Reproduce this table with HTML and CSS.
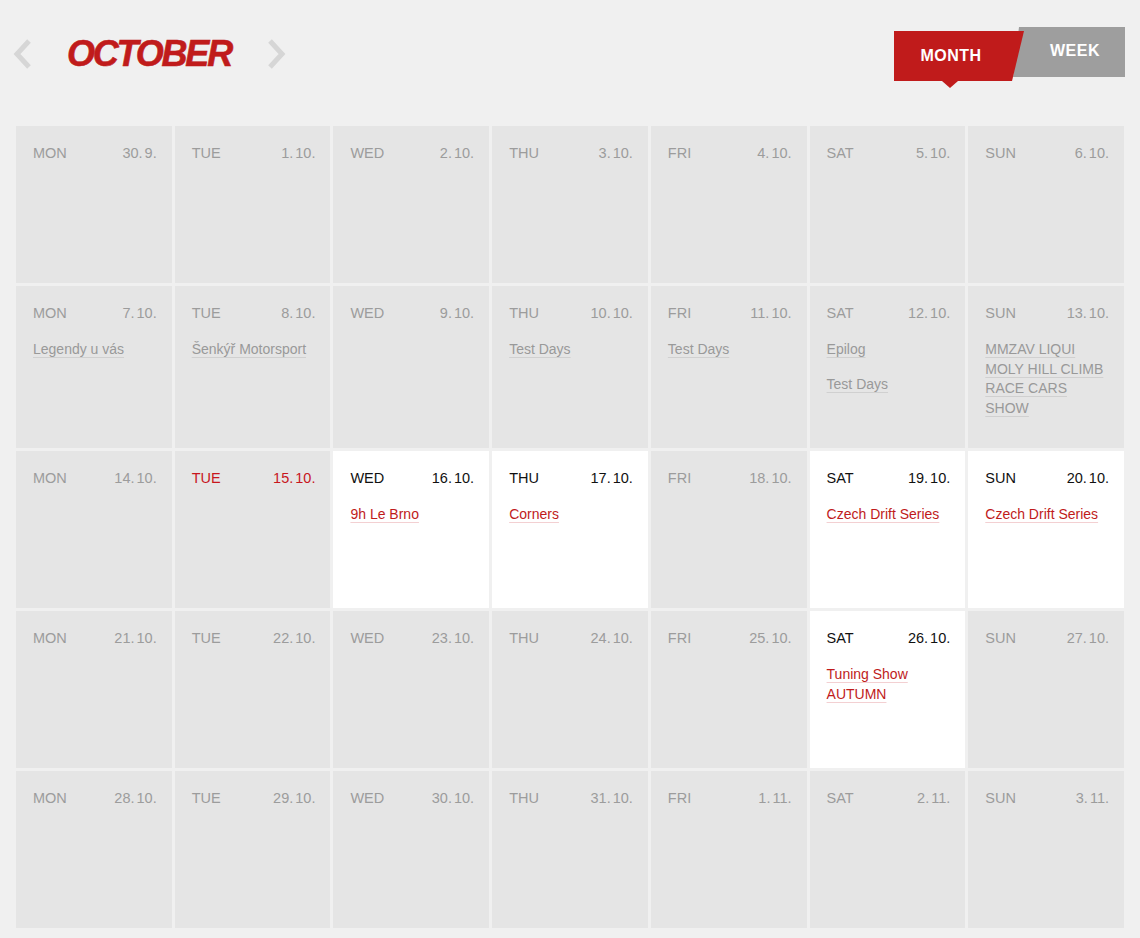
FILE: index.html
```html
<!DOCTYPE html>
<html lang="en">
<head>
    <meta charset="UTF-8">
    <meta name="viewport" content="width=device-width, initial-scale=1.0">
    <title>Calendar - October</title>
    <link rel="stylesheet" href="styles.css">
</head>
<body>
    <div class="header">
        <div class="month-nav">
            <a class="arrow" href="#"><svg width="20" height="30" viewBox="0 0 20 30"><polyline points="17,2 5,15 17,28" fill="none" stroke="#d6d6d6" stroke-width="5"/></svg></a>
            <h1>October</h1>
            <a class="arrow" href="#"><svg width="20" height="30" viewBox="0 0 20 30"><polyline points="3,2 15,15 3,28" fill="none" stroke="#d6d6d6" stroke-width="5"/></svg></a>
        </div>
        <div class="view-toggle">
            <a class="tab tab-month" href="#">Month</a>
            <a class="tab tab-week" href="#">Week</a>
        </div>
    </div>

    <div class="calendar">
        <div class="day"><div class="day-head"><span>Mon</span><span>30. 9.</span></div></div>
        <div class="day"><div class="day-head"><span>Tue</span><span>1. 10.</span></div></div>
        <div class="day"><div class="day-head"><span>Wed</span><span>2. 10.</span></div></div>
        <div class="day"><div class="day-head"><span>Thu</span><span>3. 10.</span></div></div>
        <div class="day"><div class="day-head"><span>Fri</span><span>4. 10.</span></div></div>
        <div class="day"><div class="day-head"><span>Sat</span><span>5. 10.</span></div></div>
        <div class="day"><div class="day-head"><span>Sun</span><span>6. 10.</span></div></div>

        <div class="day"><div class="day-head"><span>Mon</span><span>7. 10.</span></div>
            <div class="event"><a href="#">Legendy u vás</a></div></div>
        <div class="day"><div class="day-head"><span>Tue</span><span>8. 10.</span></div>
            <div class="event"><a href="#">Šenkýř Motorsport</a></div></div>
        <div class="day"><div class="day-head"><span>Wed</span><span>9. 10.</span></div></div>
        <div class="day"><div class="day-head"><span>Thu</span><span>10. 10.</span></div>
            <div class="event"><a href="#">Test Days</a></div></div>
        <div class="day"><div class="day-head"><span>Fri</span><span>11. 10.</span></div>
            <div class="event"><a href="#">Test Days</a></div></div>
        <div class="day"><div class="day-head"><span>Sat</span><span>12. 10.</span></div>
            <div class="event"><a href="#">Epilog</a></div>
            <div class="event"><a href="#">Test Days</a></div></div>
        <div class="day"><div class="day-head"><span>Sun</span><span>13. 10.</span></div>
            <div class="event"><a href="#">MMZAV LIQUI MOLY HILL CLIMB RACE CARS SHOW</a></div></div>

        <div class="day"><div class="day-head"><span>Mon</span><span>14. 10.</span></div></div>
        <div class="day today"><div class="day-head"><span>Tue</span><span>15. 10.</span></div></div>
        <div class="day upcoming"><div class="day-head"><span>Wed</span><span>16. 10.</span></div>
            <div class="event"><a href="#">9h Le Brno</a></div></div>
        <div class="day upcoming"><div class="day-head"><span>Thu</span><span>17. 10.</span></div>
            <div class="event"><a href="#">Corners</a></div></div>
        <div class="day"><div class="day-head"><span>Fri</span><span>18. 10.</span></div></div>
        <div class="day upcoming"><div class="day-head"><span>Sat</span><span>19. 10.</span></div>
            <div class="event"><a href="#">Czech Drift Series</a></div></div>
        <div class="day upcoming"><div class="day-head"><span>Sun</span><span>20. 10.</span></div>
            <div class="event"><a href="#">Czech Drift Series</a></div></div>

        <div class="day"><div class="day-head"><span>Mon</span><span>21. 10.</span></div></div>
        <div class="day"><div class="day-head"><span>Tue</span><span>22. 10.</span></div></div>
        <div class="day"><div class="day-head"><span>Wed</span><span>23. 10.</span></div></div>
        <div class="day"><div class="day-head"><span>Thu</span><span>24. 10.</span></div></div>
        <div class="day"><div class="day-head"><span>Fri</span><span>25. 10.</span></div></div>
        <div class="day upcoming"><div class="day-head"><span>Sat</span><span>26. 10.</span></div>
            <div class="event"><a href="#">Tuning Show AUTUMN</a></div></div>
        <div class="day"><div class="day-head"><span>Sun</span><span>27. 10.</span></div></div>

        <div class="day"><div class="day-head"><span>Mon</span><span>28. 10.</span></div></div>
        <div class="day"><div class="day-head"><span>Tue</span><span>29. 10.</span></div></div>
        <div class="day"><div class="day-head"><span>Wed</span><span>30. 10.</span></div></div>
        <div class="day"><div class="day-head"><span>Thu</span><span>31. 10.</span></div></div>
        <div class="day"><div class="day-head"><span>Fri</span><span>1. 11.</span></div></div>
        <div class="day"><div class="day-head"><span>Sat</span><span>2. 11.</span></div></div>
        <div class="day"><div class="day-head"><span>Sun</span><span>3. 11.</span></div></div>
    </div>
</body>
</html>
```

FILE: styles.css
```css
body {
    margin: 0;
    padding: 0 16px;
    background-color: #f0f0f0;
    font-family: "Liberation Sans", Arial, sans-serif;
}
a {
    text-decoration: none;
}
.header {
    display: flex;
    justify-content: space-between;
    align-items: flex-start;
    height: 126px;
    padding-top: 27px;
    box-sizing: border-box;
}
.month-nav {
    display: flex;
    align-items: center;
    height: 54px;
    margin-left: -4px;
}
.arrow {
    display: block;
    height: 30px;
}
.month-nav h1 {
    margin: 0 36px 0 35px;
    color: #c01b1b;
    font-size: 36px;
    font-weight: bold;
    font-style: italic;
    text-transform: uppercase;
    letter-spacing: -2.2px;
    line-height: 1;
    -webkit-text-stroke: 0.6px #c01b1b;
}
.view-toggle {
    display: flex;
    align-items: flex-start;
    margin-right: -1px;
}
.tab {
    display: flex;
    align-items: center;
    justify-content: center;
    height: 50px;
    color: #fff;
    font-size: 16px;
    font-weight: bold;
    text-transform: uppercase;
    letter-spacing: 0.5px;
}
.tab-month {
    position: relative;
    z-index: 2;
    width: 130px;
    margin-top: 4px;
    padding-right: 16px;
    box-sizing: border-box;
}
.tab-month::before {
    content: "";
    position: absolute;
    inset: 0;
    z-index: -1;
    background-color: #c01b1b;
    clip-path: polygon(0 0, 100% 0, calc(100% - 12px) 100%, 0 100%);
}
.tab-month::after {
    content: "";
    position: absolute;
    top: 50px;
    left: 48px;
    border-left: 8px solid transparent;
    border-right: 8px solid transparent;
    border-top: 7px solid #c01b1b;
}
.tab-week {
    width: 112px;
    margin-left: -11px;
    padding-left: 12px;
    padding-bottom: 2px;
    box-sizing: border-box;
    background-color: #9e9e9e;
    clip-path: polygon(6px 0, 100% 0, 100% 100%, 0 100%);
}
.calendar {
    display: grid;
    grid-template-columns: repeat(7, 1fr);
    grid-auto-rows: minmax(157px, auto);
    gap: 3px;
}
.day {
    background-color: #e5e5e5;
    padding: 18px 15px 15px 17px;
    color: #9c9c9c;
}
.day-head {
    display: flex;
    justify-content: space-between;
    font-size: 14.5px;
    line-height: 18px;
    text-transform: uppercase;
    word-spacing: -2px;
    margin-bottom: 18px;
}
.event {
    font-size: 14px;
    line-height: 19.5px;
    margin-bottom: 15px;
}
.event a {
    color: #999;
    text-decoration: underline;
    text-decoration-color: #d0d0d0;
    text-underline-offset: 3px;
}
.today {
    color: #c8161d;
}
.upcoming {
    background-color: #fff;
    color: #111;
}
.upcoming .event a {
    color: #c01b1b;
    text-decoration-color: #f3d0d2;
}
```
